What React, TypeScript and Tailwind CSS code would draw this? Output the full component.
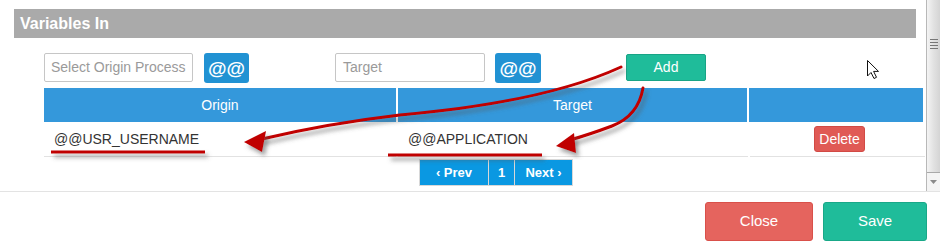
import React from "react";

function Scrollbar() {
  return (
    <div className="w-[14px] flex flex-col border-l border-[#b8b8b8] bg-[#f0f0f0]">
      {/* thumb */}
      <div className="flex-1 flex flex-col items-center bg-gradient-to-r from-[#f4f4f4] via-[#e2e2e2] to-[#d4d4d4] border-b border-[#a9a9a9]">
        <div className="mt-[39px] flex flex-col gap-[2px]">
          <div className="w-[8px] h-[1px] bg-[#777]" />
          <div className="w-[8px] h-[1px] bg-[#777]" />
          <div className="w-[8px] h-[1px] bg-[#777]" />
          <div className="w-[8px] h-[1px] bg-[#777]" />
        </div>
      </div>
      {/* down arrow */}
      <div className="h-[18px] flex items-center justify-center bg-[#f4f4f4]">
        <svg width="7" height="4" viewBox="0 0 7 4">
          <path d="M0 0 L7 0 L3.5 4 Z" fill="#8a8a8a" />
        </svg>
      </div>
    </div>
  );
}

function Annotations() {
  return (
    <svg className="absolute inset-0 pointer-events-none" width="940" height="249" viewBox="0 0 940 249">
      <defs>
        <filter id="shadow" x="-10%" y="-30%" width="120%" height="160%">
          <feDropShadow dx="3" dy="4" stdDeviation="2" floodColor="#555" floodOpacity="0.55" />
        </filter>
      </defs>
      <g filter="url(#shadow)" fill="none" stroke="#c00000" strokeWidth="3" strokeLinecap="round">
        <path d="M621 67 C 560 95 480 108 400 115 C 340 122 300 130 262 139" />
        <path d="M643 88 C 640 106 630 119 612 126 C 596 132 584 136 570 140" />
        <path d="M51 152 L205 152" strokeLinecap="butt" />
        <path d="M388 155 L542 155" strokeLinecap="butt" />
      </g>
      <g filter="url(#shadow)" fill="#c00000">
        <path d="M244 142 L266 131 L262 152 Z" />
        <path d="M556 146 L574 133 L576 153 Z" />
      </g>
      {/* mouse cursor */}
      <path
        d="M867.5 60.5 L867.5 76 L871 72.5 L874 78.5 L876.5 77.3 L873.6 71.4 L878.5 71.4 Z"
        fill="#fff"
        stroke="#111"
        strokeWidth="1"
        strokeLinejoin="round"
      />
    </svg>
  );
}

export default function App() {
  return (
    <div className="relative w-[940px] h-[249px] bg-white overflow-hidden font-['Liberation_Sans',Arial,sans-serif]">
      <div className="flex h-[191px]">
        <div className="flex-1 pt-[9px]">
          {/* Section title */}
          <div className="ml-[14px] mr-[10px] h-[29px] bg-[#aaaaaa] flex items-center pl-[6px]">
            <span className="text-white font-bold text-[16px]">Variables In</span>
          </div>

          {/* Inputs row */}
          <div className="flex items-start mt-[15px] ml-[44px]">
            <div className="w-[149px] h-[29px] border border-[#c6c6c6] rounded-[2px] flex items-center px-[6px] text-[14px] text-[#9a9a9a]">
              Select Origin Process
            </div>
            <div className="ml-[11px] w-[45px] h-[30px] rounded-[3px] bg-[#2192d3] flex items-center justify-center text-white font-bold text-[19px] leading-none">
              @@
            </div>
            <div className="ml-[86px] w-[150px] h-[29px] border border-[#c6c6c6] rounded-[2px] flex items-center px-[7px] text-[14px] text-[#9a9a9a]">
              Target
            </div>
            <div className="ml-[10px] w-[46px] h-[30px] rounded-[3px] bg-[#2192d3] flex items-center justify-center text-white font-bold text-[19px] leading-none">
              @@
            </div>
            <div className="ml-[85px] mt-[1px] w-[80px] h-[27px] rounded-[2px] bg-[#1fbc9a] border border-[#18a486] flex items-center justify-center text-white text-[14px]">
              Add
            </div>
          </div>

          {/* Table */}
          <div className="ml-[44px] w-[879px] mt-[5px]">
            <div className="grid grid-cols-[352px_350px_175px] gap-x-[1px] bg-white h-[34px]">
              <div className="bg-[#3498db] flex items-center justify-center text-white text-[14px]">Origin</div>
              <div className="bg-[#3498db] flex items-center justify-center text-white text-[14px] border-l border-white">Target</div>
              <div className="bg-[#3498db] border-l border-white" />
            </div>
            <div className="grid grid-cols-[352px_350px_175px] gap-x-[2px] h-[35px] items-center">
              <div className="h-full border-b border-[#e2e2e2] flex items-center pl-[10px] text-[14px] text-[#333]">@@USR_USERNAME</div>
              <div className="h-full border-b border-[#e2e2e2] flex items-center pl-[10px] text-[14px] text-[#333]">@@APPLICATION</div>
              <div className="h-full border-b border-[#e2e2e2] flex items-center justify-center">
                <div className="ml-[4px] w-[51px] h-[26px] rounded-[3px] bg-[#e05a55] border border-[#d24a45] flex items-center justify-center text-white text-[14px]">
                  Delete
                </div>
              </div>
            </div>

            {/* Pagination */}
            <div className="flex mt-[2px] ml-[375px] h-[27px]">
              <div className="w-[70px] bg-[#0a98e2] border border-[#d8d8d8] flex items-center justify-center text-white text-[13px] font-bold">
                ‹ Prev
              </div>
              <div className="w-[26px] bg-[#0a98e2] border-y border-r border-[#d8d8d8] flex items-center justify-center text-white text-[13px] font-bold">
                1
              </div>
              <div className="w-[58px] bg-[#0a98e2] border-y border-r border-[#d8d8d8] flex items-center justify-center text-white text-[13px] font-bold">
                Next ›
              </div>
            </div>
          </div>
        </div>
        <Scrollbar />
      </div>

      {/* Footer */}
      <div className="border-t border-[#e3e3e3] flex justify-end pt-[10px] pr-[13px] gap-[10px]">
        <div className="w-[108px] h-[39px] rounded-[3px] bg-[#e5645e] border border-[#d9504a] flex items-center justify-center text-white text-[15px]">
          Close
        </div>
        <div className="w-[104px] h-[39px] rounded-[3px] bg-[#1fbc9a] border border-[#19a888] flex items-center justify-center text-white text-[15px]">
          Save
        </div>
      </div>

      <Annotations />
    </div>
  );
}
